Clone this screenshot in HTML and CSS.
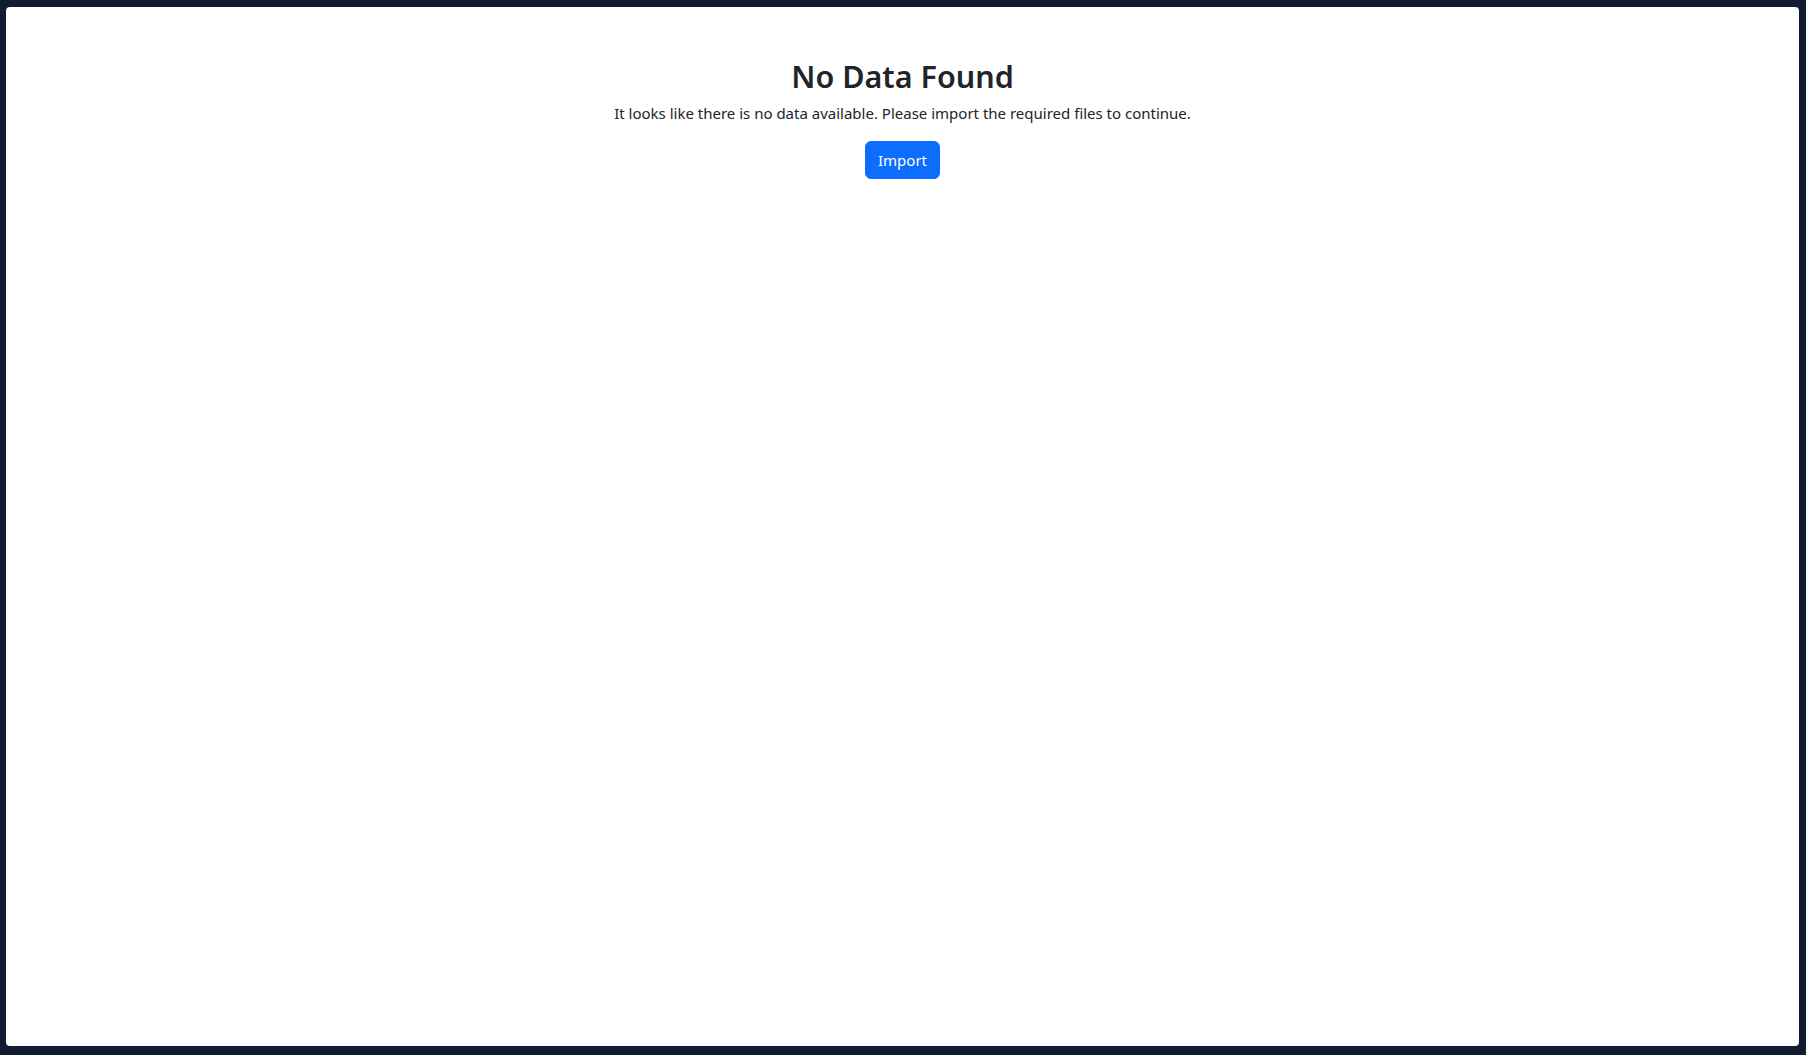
FILE: index.html
```html
<!DOCTYPE html>
<html lang="en">
<head>
<meta charset="utf-8">
<title>No Data Found</title>
<link rel="stylesheet" href="styles.css">
</head>
<body>
<main class="frame">
  <section class="empty">
    <h2 class="empty-title">No Data Found</h2>
    <p class="empty-text">It looks like there is no data available. Please import the required files to continue.</p>
    <button class="btn-primary" type="button">Import</button>
  </section>
</main>
</body>
</html>
```
FILE: styles.css
```css
html, body {
  height: 100%;
}
body {
  margin: 0;
  background: #111c30;
  font-family: "Noto Sans", "Open Sans", "Liberation Sans", sans-serif;
  color: #212529;
  display: flex;
  box-sizing: border-box;
  padding: 7px 7px 9px 6px;
}
.frame {
  flex: 1;
  background: #ffffff;
  border-radius: 4px;
}
.empty {
  display: flex;
  flex-direction: column;
  align-items: center;
  padding-top: 50px;
  text-align: center;
}
.empty-title {
  margin: 0 0 6px;
  font-size: 30.5px;
  font-weight: 600;
  line-height: 38px;
}
.empty-text {
  margin: 0 0 16px;
  font-size: 15px;
  line-height: 24px;
}
.btn-primary {
  font-family: inherit;
  font-size: 15px;
  line-height: 24px;
  padding: 6px 12px;
  color: #fff;
  background: #0d6efd;
  border: 1px solid #0d6efd;
  border-radius: 6px;
}
```
